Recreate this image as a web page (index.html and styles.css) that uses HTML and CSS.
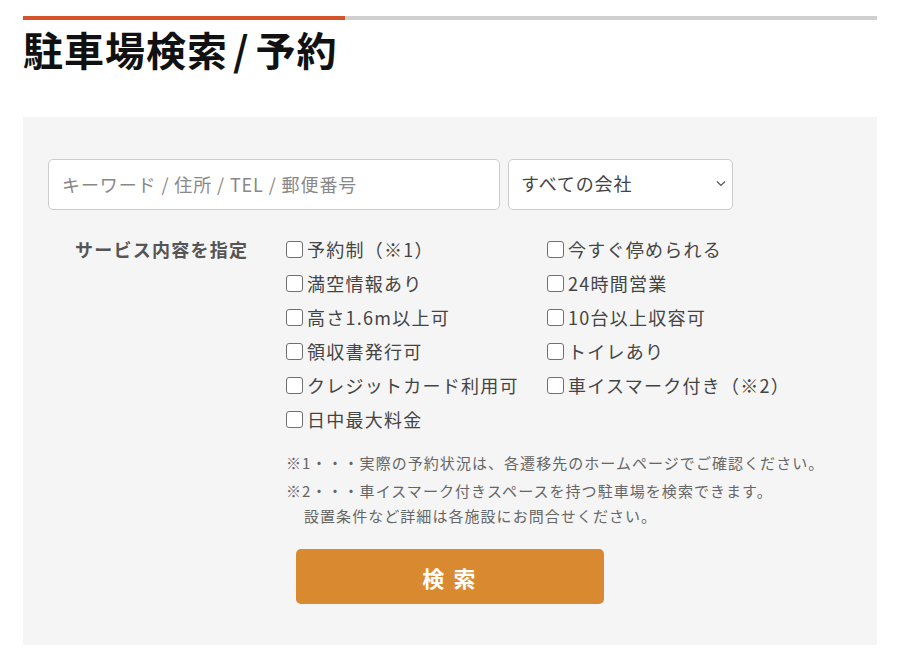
FILE: index.html
```html
<!DOCTYPE html>
<html lang="ja">
<head>
    <meta charset="UTF-8">
    <meta name="viewport" content="width=device-width, initial-scale=1.0">
    <title>駐車場検索/予約</title>
    <link rel="stylesheet" href="styles.css">
</head>
<body>
    <div class="page">
        <div class="title-bar"><span class="title-bar-accent"></span></div>
        <h1 class="page-title">駐車場検索<span class="slash">/</span>予約</h1>

        <form class="search-panel" onsubmit="return false;">
            <div class="search-row">
                <input type="text" class="keyword" placeholder="キーワード / 住所 / TEL / 郵便番号">
                <div class="select-wrap">
                    <select class="company">
                        <option>すべての会社</option>
                    </select>
                    <svg class="select-arrow" width="10" height="7" viewBox="0 0 10 7">
                        <path d="M1 1.5 L5 5.5 L9 1.5" fill="none" stroke="#555" stroke-width="1.2"/>
                    </svg>
                </div>
            </div>

            <div class="service-row">
                <div class="service-label">サービス内容を指定</div>
                <div class="service-list">
                    <label class="service-item"><input type="checkbox">予約制（※1）</label>
                    <label class="service-item"><input type="checkbox">満空情報あり</label>
                    <label class="service-item"><input type="checkbox">高さ1.6m以上可</label>
                    <label class="service-item"><input type="checkbox">領収書発行可</label>
                    <label class="service-item"><input type="checkbox">クレジットカード利用可</label>
                    <label class="service-item"><input type="checkbox">日中最大料金</label>
                    <label class="service-item"><input type="checkbox">今すぐ停められる</label>
                    <label class="service-item"><input type="checkbox">24時間営業</label>
                    <label class="service-item"><input type="checkbox">10台以上収容可</label>
                    <label class="service-item"><input type="checkbox">トイレあり</label>
                    <label class="service-item"><input type="checkbox">車イスマーク付き（※2）</label>
                </div>
            </div>

            <div class="notes">
                <p>※1・・・実際の予約状況は、各遷移先のホームページでご確認ください。</p>
                <p>※2・・・車イスマーク付きスペースを持つ駐車場を検索できます。<span class="note-cont">設置条件など詳細は各施設にお問合せください。</span></p>
            </div>

            <button type="submit" class="search-btn">検 索</button>
        </form>
    </div>
</body>
</html>
```

FILE: styles.css
```css
body {
    margin: 0;
    font-family: "Noto Sans CJK JP", "Noto Sans", sans-serif;
    background-color: #fff;
    color: #444;
}

.page {
    padding: 16px 23px;
}

.title-bar {
    height: 4px;
    background-color: #d0d0d0;
}

.title-bar-accent {
    display: block;
    width: 322px;
    height: 4px;
    background-color: #d4532b;
}

.page-title {
    margin: 5px 0 44px;
    font-size: 40px;
    line-height: 48px;
    font-weight: bold;
    color: #111;
    letter-spacing: 1px;
}

.page-title .slash {
    padding: 0 6px 0 5px;
}

.search-panel {
    background-color: #f5f5f5;
    padding: 42px 25px 41px;
}

.search-row {
    display: flex;
    gap: 8px;
}

.keyword,
.company {
    box-sizing: border-box;
    height: 51px;
    border: 1px solid #ccc;
    border-radius: 5px;
    background-color: #fff;
    font-family: inherit;
    font-size: 18px;
    letter-spacing: 0.05em;
    color: #444;
    padding-bottom: 3px;
}

.keyword {
    width: 452px;
    padding-left: 13px;
    padding-right: 13px;
}

.keyword::placeholder {
    color: #888;
}

.select-wrap {
    position: relative;
}

.company {
    width: 225px;
    padding-left: 12px;
    padding-right: 12px;
    appearance: none;
    -webkit-appearance: none;
}

.select-arrow {
    position: absolute;
    right: 7px;
    top: 21px;
    pointer-events: none;
}

.service-row {
    display: flex;
    margin-top: 22px;
}

.service-label {
    width: 238px;
    padding-left: 27px;
    box-sizing: border-box;
    font-size: 18px;
    line-height: 34px;
    font-weight: bold;
    color: #555;
    letter-spacing: 0.07em;
}

.service-list {
    display: grid;
    grid-template-columns: 261px 261px;
    grid-template-rows: repeat(6, 34px);
    grid-auto-flow: column;
}

.service-item {
    display: flex;
    align-items: center;
    font-size: 18px;
    letter-spacing: 0.07em;
    color: #444;
    cursor: pointer;
}

.service-item input {
    appearance: none;
    -webkit-appearance: none;
    box-sizing: border-box;
    width: 17px;
    height: 17px;
    margin: 0 4px 0 0;
    border: 1.5px solid #707070;
    border-radius: 3px;
    background-color: #fff;
}

.notes {
    margin: 14px 0 0 238px;
    font-size: 15px;
    letter-spacing: 0.07em;
    color: #666;
}

.notes p {
    margin: 0 0 3px;
    line-height: 25px;
}

.note-cont {
    display: block;
    padding-left: 18px;
}

.search-btn {
    display: block;
    width: 308px;
    height: 55px;
    margin: 21px 0 0 248px;
    border: none;
    border-radius: 5px;
    background-color: #d98a30;
    color: #fff;
    font-family: inherit;
    font-size: 22px;
    font-weight: bold;
    letter-spacing: 0.1em;
    cursor: pointer;
}

.search-btn:hover {
    background-color: #c77a24;
}
```
